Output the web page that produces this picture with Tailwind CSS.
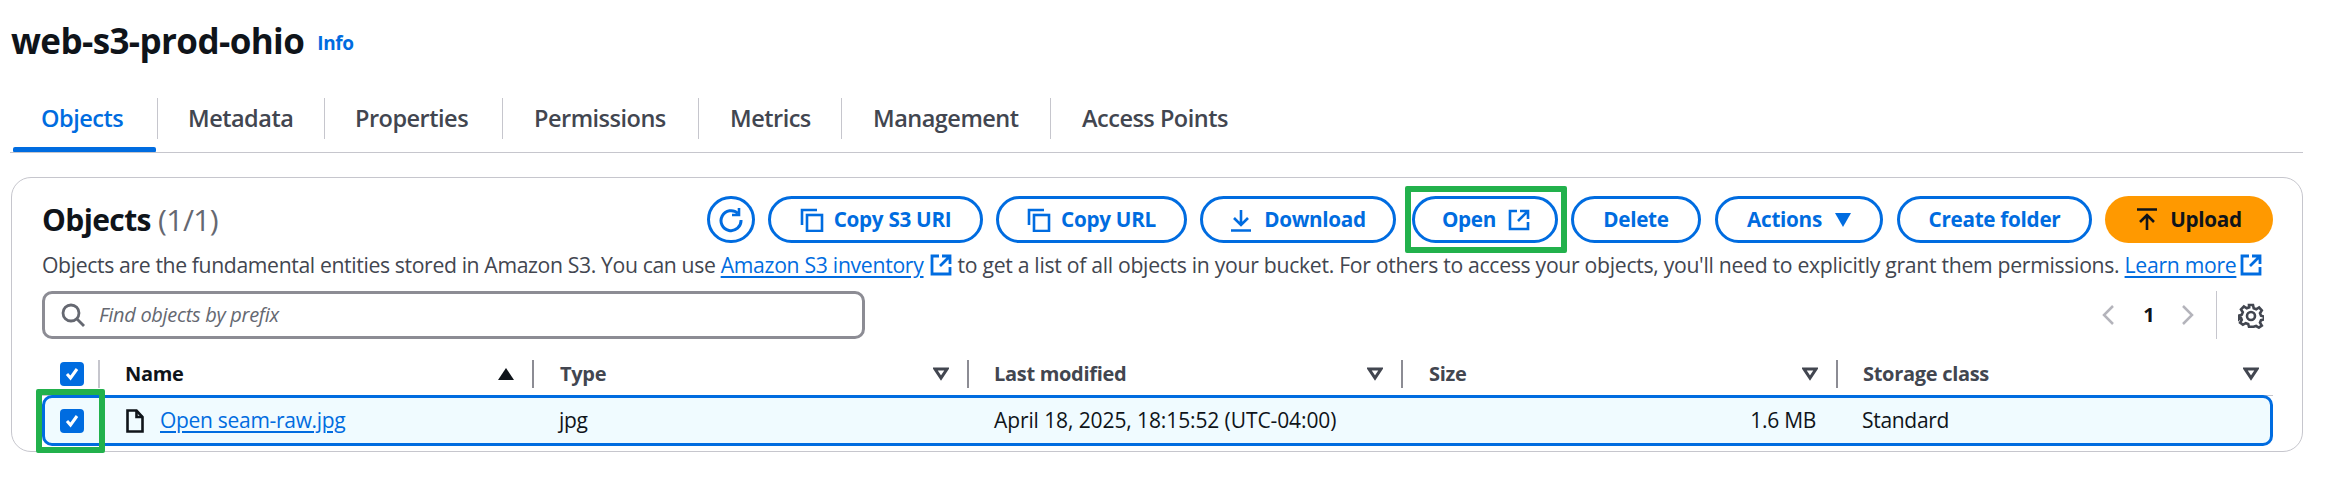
<!DOCTYPE html>
<html lang="en">
<head>
<meta charset="UTF-8">
<title>web-s3-prod-ohio</title>
<script src="https://cdn.jsdelivr.net/npm/@tailwindcss/browser@4"></script>
</head>
<body class="bg-white [font-family:'Open_Sans',sans-serif] text-[#0f141a] w-[2327px] h-[487px] overflow-hidden relative">

<!-- page title -->
<header class="h-[60px] pl-[11px] pt-[20px] flex items-center gap-[13px]">
  <h1 class="text-[35px] font-bold tracking-[-0.6px] leading-none">web-s3-prod-ohio</h1>
  <a class="text-[19px] font-bold text-[#006ce0] mt-[6px] tracking-[-0.4px]">Info</a>
</header>

<!-- tabs -->
<nav class="mt-[38px] ml-[10px] w-[2293px] h-[55px] border-b border-[#c6c6cd] flex text-[23.5px] font-semibold text-[#424650] tracking-[-0.5px] relative">
  <a class="w-[148px] h-[41px] border-r border-[#c6c6cd] pl-[31px] flex items-center text-[#006ce0]">Objects</a>
  <a class="w-[167px] h-[41px] border-r border-[#c6c6cd] pl-[30px] flex items-center">Metadata</a>
  <a class="w-[178px] h-[41px] border-r border-[#c6c6cd] pl-[30px] flex items-center">Properties</a>
  <a class="w-[196px] h-[41px] border-r border-[#c6c6cd] pl-[31px] flex items-center">Permissions</a>
  <a class="w-[143px] h-[41px] border-r border-[#c6c6cd] pl-[31px] flex items-center">Metrics</a>
  <a class="w-[209px] h-[41px] border-r border-[#c6c6cd] pl-[31px] flex items-center">Management</a>
  <a class="h-[41px] pl-[31px] flex items-center">Access Points</a>
  <span class="absolute left-[3px] bottom-0 w-[143px] h-[5px] bg-[#006ce0] rounded-t-[2px] rounded-b-[1px]"></span>
</nav>

<!-- objects card -->
<section class="mt-[24px] ml-[11px] w-[2292px] h-[275px] border border-[#c6c6cd] rounded-[20px] pl-[30px] pr-[29px] pt-[18px]">

  <div class="flex items-center justify-between h-[47px]">
    <h2 class="text-[30px] leading-none tracking-[-0.6px]"><b class="font-bold">Objects</b> <span class="text-[#656871] font-normal">(1/1)</span></h2>
    <div class="flex items-center text-[20.7px] font-bold text-[#006ce0] tracking-[-0.3px]">
      <button class="w-[48px] h-[47px] rounded-full border-[3px] border-[#006ce0] flex items-center justify-center">
        <svg class="w-[26px] h-[26px]" viewBox="0 0 26 26" fill="none" stroke="#006ce0" stroke-width="3"><path d="M20 6.5A10 10 0 1 0 23 13"/><path d="M21 1v7h-7" stroke-width="2.6"/></svg>
      </button>
      <button class="ml-[13px] w-[215px] h-[47px] rounded-full border-[3px] border-[#006ce0] flex items-center justify-center gap-[10px]">
        <svg class="w-[24px] h-[24px]" viewBox="0 0 24 24" fill="none" stroke="#006ce0" stroke-width="2.6"><path d="M2 17V2h15"/><rect x="7" y="7" width="15" height="16"/></svg>Copy S3 URI
      </button>
      <button class="ml-[13px] w-[191px] h-[47px] rounded-full border-[3px] border-[#006ce0] flex items-center justify-center gap-[10px]">
        <svg class="w-[24px] h-[24px]" viewBox="0 0 24 24" fill="none" stroke="#006ce0" stroke-width="2.6"><path d="M2 17V2h15"/><rect x="7" y="7" width="15" height="16"/></svg>Copy URL
      </button>
      <button class="ml-[13px] w-[196px] h-[47px] rounded-full border-[3px] border-[#006ce0] flex items-center justify-center gap-[12px]">
        <svg class="w-[22px] h-[24px]" viewBox="0 0 22 24" fill="none" stroke="#006ce0" stroke-width="2.6"><path d="M11 2v14M4 10l7 7 7-7M1 22.5h20"/></svg>Download
      </button>
      <button class="ml-[16px] w-[146px] h-[47px] rounded-full border-[3px] border-[#006ce0] flex items-center justify-center gap-[12px] pl-[2px]">
        Open<svg class="w-[22px] h-[22px]" viewBox="0 0 22 22" fill="none" stroke="#006ce0" stroke-width="2.6"><path d="M9 2H2v18h18v-7M12 2h8v8M20 2L10 12"/></svg>
      </button>
      <button class="ml-[13px] w-[130px] h-[47px] rounded-full border-[3px] border-[#006ce0] flex items-center justify-center">Delete</button>
      <button class="ml-[14px] w-[168px] h-[47px] rounded-full border-[3px] border-[#006ce0] flex items-center justify-center gap-[13px]">
        Actions<svg class="w-[16px] h-[14px]" viewBox="0 0 16 14" fill="#006ce0"><path d="M0 0h16L8 14z"/></svg>
      </button>
      <button class="ml-[14px] w-[195px] h-[47px] rounded-full border-[3px] border-[#006ce0] flex items-center justify-center">Create folder</button>
      <button class="ml-[13px] w-[168px] h-[47px] rounded-full bg-[#ff9900] text-[#0f141a] flex items-center justify-center gap-[12px]">
        <svg class="w-[22px] h-[24px]" viewBox="0 0 22 24" fill="none" stroke="#0f141a" stroke-width="2.6"><path d="M1 1.5h20M11 22V8M4 14l7-7 7 7"/></svg>Upload
      </button>
    </div>
  </div>

  <p class="mt-[8px] h-[27px] flex items-center text-[21.2px] text-[#424650] tracking-[-0.3px] whitespace-nowrap">
    <span class="tracking-[-0.37px]">Objects are the fundamental entities stored in Amazon S3. You can use&nbsp;</span>
    <a class="text-[#006ce0] underline underline-offset-[3px]">Amazon S3 inventory</a>
    <svg class="w-[22px] h-[22px] ml-[6px] mr-[6px]" viewBox="0 0 22 22" fill="none" stroke="#006ce0" stroke-width="2.8"><path d="M9 2H2v18h18v-7M12 2h8v8M20 2L10 12"/></svg>
    to get a list of all objects in your bucket. For others to access your objects, you'll need to explicitly grant them permissions.&nbsp;
    <a class="text-[#006ce0] underline underline-offset-[3px]">Learn more</a>
    <svg class="w-[22px] h-[22px] ml-[4px]" viewBox="0 0 22 22" fill="none" stroke="#006ce0" stroke-width="2.8"><path d="M9 2H2v18h18v-7M12 2h8v8M20 2L10 12"/></svg>
  </p>

  <div class="mt-[13px] flex items-center justify-between h-[48px]">
    <label class="w-[823px] h-[48px] border-[3px] border-[#8c8c94] rounded-[10px] flex items-center pl-[16px] gap-[14px]">
      <svg class="w-[24px] h-[24px]" viewBox="0 0 24 24" fill="none" stroke="#656871" stroke-width="2.8"><circle cx="10" cy="10" r="8"/><path d="M16 16l7 7"/></svg>
      <span class="italic text-[20px] text-[#656871] tracking-[-0.3px]">Find objects by prefix</span>
    </label>
    <div class="flex items-center h-[48px]">
      <svg class="w-[14px] h-[20px]" viewBox="0 0 14 20" fill="none" stroke="#b4b4bb" stroke-width="2.5"><path d="M12 1L3 10l9 9"/></svg>
      <span class="w-[28px] ml-[20px] mr-[18px] text-center text-[20px] font-bold">1</span>
      <svg class="w-[14px] h-[20px]" viewBox="0 0 14 20" fill="none" stroke="#b4b4bb" stroke-width="2.5"><path d="M2 1l9 9-9 9"/></svg>
      <span class="ml-[21px] w-px h-[48px] bg-[#c6c6cd]"></span>
      <svg class="w-[26px] h-[26px] ml-[21px] mr-[9px] mt-[1px]" viewBox="0 0 26 26" fill="none" stroke="#424650" stroke-width="2.6"><circle cx="13" cy="13" r="4"/><path d="M11 2h4l.7 3.300 2.500 1 2.900-1.800 2.700 2.900-1.800 2.800 1 2.500 3 .8v3l-3 .7-1 2.500 1.800 2.900-2.900 2-2.800-1.600-2.500.8H11l-.8-2.700-2.500-.9-2.800 1.600-2.800-2.200 1.700-2.800-1-2.500L1 16v-3.500l2.800-.8 1-2.500L3 6.400l2.900-2.900 2.800 1.800 2.500-1z"/></svg>
    </div>
  </div>

  <!-- table -->
  <div class="mt-[8px] w-[2231px] grid grid-cols-[58px_434px_435px_434px_435px_435px] text-[20px]">
    <div class="col-span-6 grid grid-cols-subgrid h-[49px] items-center font-bold text-[#424650] border-b border-[#c6c6cd] tracking-[-0.3px]">
      <div class="flex items-center h-[28px] mt-[6px] pl-[18px] relative">
        <span class="w-[24px] h-[24px] rounded-[4px] bg-[#006ce0] flex items-center justify-center">
          <svg class="w-[16px] h-[16px]" viewBox="0 0 16 16" fill="none" stroke="#fff" stroke-width="3"><path d="M3 8l3.500 4L13 3"/></svg>
        </span>
        <span class="absolute right-0 top-0 w-[2px] h-[28px] bg-[#c6c6cd]"></span>
      </div>
      <div class="flex items-center justify-between mt-[6px] pl-[25px] pr-[20px] text-[#0f141a] h-[28px] relative">Name
        <svg class="w-[16px] h-[12px]" viewBox="0 0 16 12" fill="#0f141a"><path d="M8 0l8 12H0z"/></svg>
        <span class="absolute right-0 top-0 w-[2px] h-[28px] bg-[#8c8c94]"></span>
      </div>
      <div class="flex items-center justify-between mt-[6px] pl-[26px] pr-[20px] h-[28px] relative">Type
        <svg class="w-[16px] h-[14px]" viewBox="0 0 16 14" fill="none" stroke="#424650" stroke-width="3"><path d="M2 2h12l-6 9z"/></svg>
        <span class="absolute right-0 top-0 w-[2px] h-[28px] bg-[#8c8c94]"></span>
      </div>
      <div class="flex items-center justify-between mt-[6px] pl-[25px] pr-[20px] h-[28px] relative">Last modified
        <svg class="w-[16px] h-[14px]" viewBox="0 0 16 14" fill="none" stroke="#424650" stroke-width="3"><path d="M2 2h12l-6 9z"/></svg>
        <span class="absolute right-0 top-0 w-[2px] h-[28px] bg-[#8c8c94]"></span>
      </div>
      <div class="flex items-center justify-between mt-[6px] pl-[26px] pr-[20px] h-[28px] relative">Size
        <svg class="w-[16px] h-[14px]" viewBox="0 0 16 14" fill="none" stroke="#424650" stroke-width="3"><path d="M2 2h12l-6 9z"/></svg>
        <span class="absolute right-0 top-0 w-[2px] h-[28px] bg-[#8c8c94]"></span>
      </div>
      <div class="flex items-center justify-between mt-[6px] pl-[25px] pr-[14px] h-[28px]">Storage class
        <svg class="w-[16px] h-[14px]" viewBox="0 0 16 14" fill="none" stroke="#424650" stroke-width="3"><path d="M2 2h12l-6 9z"/></svg>
      </div>
    </div>
    <div class="col-span-6 grid grid-cols-subgrid h-[51px] mt-[-1px] items-center bg-[#f0fbff] border-[3px] border-[#006ce0] rounded-[10px] text-[21px] tracking-[-0.3px]">
      <div class="pl-[15px]">
        <span class="w-[24px] h-[24px] rounded-[4px] bg-[#006ce0] flex items-center justify-center">
          <svg class="w-[16px] h-[16px]" viewBox="0 0 16 16" fill="none" stroke="#fff" stroke-width="3"><path d="M3 8l3.500 4L13 3"/></svg>
        </span>
      </div>
      <div class="flex items-center gap-[16px] pl-[26px]">
        <svg class="w-[18px] h-[24px]" viewBox="0 0 18 24" fill="none" stroke="#0f141a" stroke-width="2.600"><path d="M1.500 1.500h9l6 6.500v14.500h-15z"/><path d="M10.500 2v6h6" /></svg>
        <a class="text-[#006ce0] underline underline-offset-[3px]">Open seam-raw.jpg</a>
      </div>
      <div class="pl-[25px]">jpg</div>
      <div class="pl-[25px] tracking-[-0.1px]">April 18, 2025, 18:15:52 (UTC-04:00)</div>
      <div class="text-right pr-[22px]">1.6 MB</div>
      <div class="pl-[24px]">Standard</div>
    </div>
  </div>
</section>

<!-- green highlights drawn over the screenshot -->
<span class="absolute left-[36px] top-[389px] w-[69px] h-[64px] border-[6px] border-[#22b14c] rounded-[2px]"></span>
<span class="absolute left-[1405px] top-[186px] w-[162px] h-[67px] border-[6px] border-[#22b14c] rounded-[2px]"></span>
</body>
</html>
